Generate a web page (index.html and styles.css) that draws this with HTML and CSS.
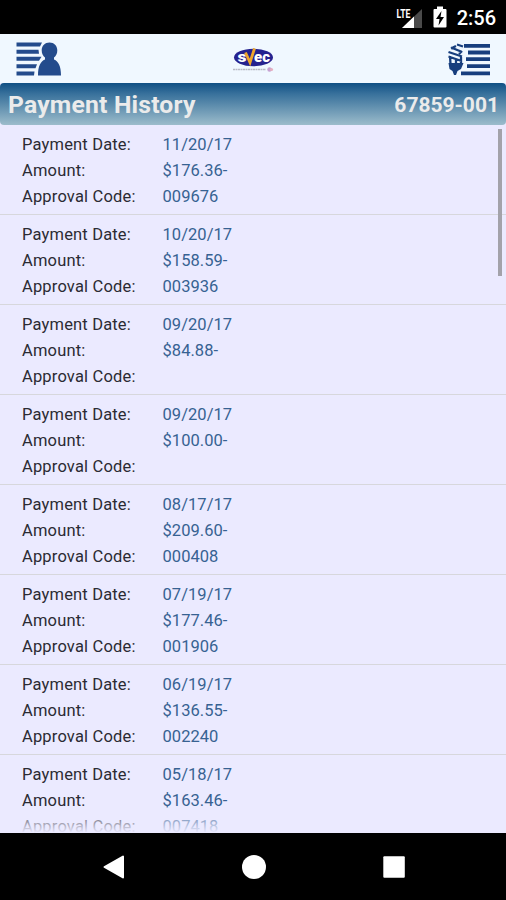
FILE: index.html
```html
<!DOCTYPE html>
<html lang="en">
  <head>
    <meta charset="UTF-8" />
    <title>Payment History</title>
    <link rel="stylesheet" href="styles.css">
  </head>
  <body>
    <div class="status-bar">
      <svg class="signal" width="28" height="24" viewBox="0 0 28 24">
        <path d="M26 2V21H6Z" fill="#4a4a4a" />
        <path d="M18 9.5V21H6Z" fill="#fff" />
        <text class="lte" x="0.5" y="10.5" textLength="14" lengthAdjust="spacingAndGlyphs">LTE</text>
      </svg>
      <svg class="battery" width="14" height="22" viewBox="0 0 14 22">
        <path d="M4 0.5h6V3h2.5q1 0 1 1v16.500q0 1-1 1h-11q-1 0-1-1V4q0-1 1-1H4Z" fill="#fff" />
        <path d="M8.500 5L3 13h3.500L5.500 19.500L11 11H7.500Z" fill="#000" />
      </svg>
      <span class="time">2:56</span>
    </div>
    <div class="toolbar">
      <svg class="icon" width="46" height="34" viewBox="0 0 46 34">
        <path d="M1.500 0.500H27L25 4.500H1.500ZM1.500 7.700H23.500L24 11.700H1.500ZM1.500 14.800H26.500L24 18.800H1.500ZM1.500 22.200H22L20.500 26.200H1.500ZM1.500 29.500H19.500L19 33.500H1.500Z" fill="#234b8c" />
        <path d="M34.500 0.500C39 0.500 42.300 3.800 42.300 8.300C42.300 11.800 41 14 39 15.500V17.500C43.500 19.500 46 24 46 33.500H23C23 24 25.500 19.500 30 17.500V15.500C28 14 26.700 11.800 26.700 8.300C26.700 3.800 30 0.500 34.500 0.500Z" fill="#234b8c" />
      </svg>
      <svg class="logo" width="42" height="28" viewBox="0 0 42 28">
        <ellipse cx="20.500" cy="11.500" rx="19.500" ry="8.700" fill="#25228f" />
        <text class="logo-text" x="4.500" y="15.500" textLength="9" lengthAdjust="spacingAndGlyphs">s</text>
        <text class="logo-text" x="21" y="15.500" textLength="16" lengthAdjust="spacingAndGlyphs">ec</text>
        <path d="M12.500 6.500L17 16.500L21.500 2.500" fill="none" stroke="#efa62c" stroke-width="2.800" />
        <path d="M0 23.500H33" stroke="#b9bac6" stroke-width="1.300" stroke-dasharray="2 0.500" />
        <circle cx="36.500" cy="23.500" r="2.200" fill="#c6a2d2" />
        <circle cx="38.500" cy="23.500" r="1.600" fill="#e5b0c0" />
      </svg>
      <svg class="icon" width="44" height="34" viewBox="0 0 44 34">
        <path d="M17 3.800H43M21 10.500H43M19 17.200H43M20 24.200H43M14 31.300H43" stroke="#173e7e" stroke-width="3.800" />
        <path d="M4 5.500L14 9.500M10 2.500L16 4.500M1.500 10L15 14.500M1.500 14.500L14.500 19M9 4L4 6.500M15 9L12 12M3 14L3.500 22M9 17.500V23M14 15V22" fill="none" stroke="#173e7e" stroke-width="2.300" />
        <path d="M1.500 21H16.500L14 27L10.500 29L9 33H7L5.500 29L2.500 27Z" fill="#173e7e" />
      </svg>
    </div>
    <div class="title-bar">
      <span class="title">Payment History</span>
      <span class="account">67859-001</span>
    </div>
    <div class="list">
      <div class="payment">
        <span>Payment Date:</span><span class="value">11/20/17</span>
        <span>Amount:</span><span class="value">$176.36-</span>
        <span>Approval Code:</span><span class="value">009676</span>
      </div>
      <div class="payment">
        <span>Payment Date:</span><span class="value">10/20/17</span>
        <span>Amount:</span><span class="value">$158.59-</span>
        <span>Approval Code:</span><span class="value">003936</span>
      </div>
      <div class="payment">
        <span>Payment Date:</span><span class="value">09/20/17</span>
        <span>Amount:</span><span class="value">$84.88-</span>
        <span>Approval Code:</span><span class="value"></span>
      </div>
      <div class="payment">
        <span>Payment Date:</span><span class="value">09/20/17</span>
        <span>Amount:</span><span class="value">$100.00-</span>
        <span>Approval Code:</span><span class="value"></span>
      </div>
      <div class="payment">
        <span>Payment Date:</span><span class="value">08/17/17</span>
        <span>Amount:</span><span class="value">$209.60-</span>
        <span>Approval Code:</span><span class="value">000408</span>
      </div>
      <div class="payment">
        <span>Payment Date:</span><span class="value">07/19/17</span>
        <span>Amount:</span><span class="value">$177.46-</span>
        <span>Approval Code:</span><span class="value">001906</span>
      </div>
      <div class="payment">
        <span>Payment Date:</span><span class="value">06/19/17</span>
        <span>Amount:</span><span class="value">$136.55-</span>
        <span>Approval Code:</span><span class="value">002240</span>
      </div>
      <div class="payment">
        <span>Payment Date:</span><span class="value">05/18/17</span>
        <span>Amount:</span><span class="value">$163.46-</span>
        <span>Approval Code:</span><span class="value">007418</span>
      </div>
      <div class="scrollbar"></div>
      <div class="fade"></div>
    </div>
    <div class="nav-bar">
      <svg width="24" height="24" viewBox="0 0 24 24">
        <path d="M22 1.500V22.500L3.500 12Z" fill="#fff" stroke="#fff" stroke-width="2" stroke-linejoin="round" />
      </svg>
      <svg width="24" height="24" viewBox="0 0 24 24">
        <circle cx="12" cy="12" r="12" fill="#fff" />
      </svg>
      <svg width="24" height="24" viewBox="0 0 24 24">
        <rect x="1.300" y="1.300" width="21.500" height="21.500" rx="1" fill="#fff" />
      </svg>
    </div>
  </body>
</html>
```
FILE: styles.css
```css
body {
  margin: 0;
  height: 900px;
  display: flex;
  flex-direction: column;
  overflow: hidden;
  background: #ebeaff;
  font-family: Roboto, "Liberation Sans", sans-serif;
}
.status-bar {
  height: 34px;
  box-sizing: border-box;
  padding: 0 10px 0 0;
  display: flex;
  align-items: center;
  justify-content: flex-end;
  background: #000;
  color: #fff;
}
.signal {
  margin: 4px 9px 0 0;
}
.battery {
  margin-right: 10px;
}
.lte {
  font-size: 13px;
  font-weight: bold;
  fill: #fff;
  stroke: #000;
  stroke-width: 1px;
  paint-order: stroke;
}
.time {
  font-size: 20px;
  font-weight: 500;
  line-height: 34px;
  padding-top: 2px;
}
.toolbar {
  height: 49px;
  box-sizing: border-box;
  padding: 0 15px;
  display: flex;
  align-items: center;
  justify-content: space-between;
  background: #f0f8ff;
}
.logo {
  margin-top: 3px;
}
.logo-text {
  font-size: 14px;
  font-weight: 900;
  fill: #fff;
}
.title-bar {
  height: 42px;
  box-sizing: border-box;
  padding: 0 7px 0 8px;
  display: flex;
  align-items: center;
  justify-content: space-between;
  border-radius: 4px;
  background: linear-gradient(#105084 0%, #37709b 25%, #9cbccb 100%);
  color: #ebebeb;
  font-weight: bold;
}
.title {
  font-size: 24.7px;
  letter-spacing: 0.2px;
  padding-top: 1px;
}
.account {
  font-size: 21px;
  padding-top: 1px;
}
.list {
  height: 708px;
  position: relative;
  overflow: hidden;
  background: #ebeaff;
}
.payment {
  height: 90px;
  box-sizing: border-box;
  padding: 7px 22px 4px;
  display: grid;
  grid-template-columns: 140.5px 1fr;
  grid-auto-rows: 26px;
  border-bottom: 1px solid #d7d7dc;
  font-size: 16.5px;
  line-height: 26px;
  letter-spacing: 0.17px;
  color: #2b2b33;
}
.value {
  letter-spacing: 0.05px;
  color: #376292;
}
.scrollbar {
  position: absolute;
  top: 4px;
  right: 4px;
  width: 4px;
  height: 147px;
  background: #a3a2aa;
}
.fade {
  position: absolute;
  left: 0;
  right: 0;
  bottom: 0;
  height: 26px;
  background: linear-gradient(#ebeaff00, #ebeaff);
}
.nav-bar {
  height: 67px;
  box-sizing: border-box;
  padding: 0 100px 0 101px;
  display: flex;
  align-items: center;
  justify-content: space-between;
  background: #000;
}
```
